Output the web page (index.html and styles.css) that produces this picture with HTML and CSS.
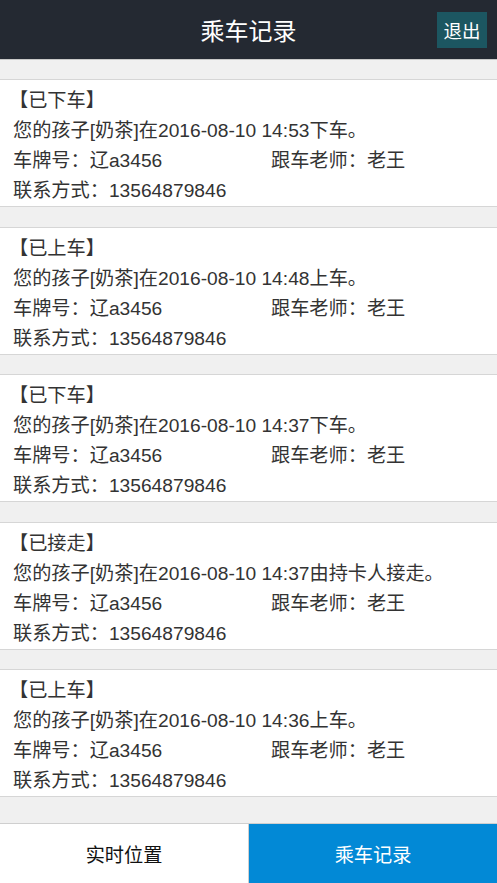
FILE: index.html
```html
<!DOCTYPE html>
<html lang="zh-CN">
<head>
<meta charset="UTF-8">
<meta name="viewport" content="width=device-width, initial-scale=1.0">
<title>乘车记录</title>
<link rel="stylesheet" href="styles.css">
</head>
<body>
  <header class="top-bar">
    <h1 class="top-title">乘车记录</h1>
    <button class="logout-btn" type="button">退出</button>
  </header>

  <main class="record-list">
    <div class="record">
      <p class="status">【已下车】</p>
      <p>您的孩子[奶茶]在2016-08-10 14:53下车。</p>
      <div class="record-row">
        <span>车牌号：辽a3456</span>
        <span>跟车老师：老王</span>
      </div>
      <p>联系方式：13564879846</p>
    </div>
    <div class="record">
      <p class="status">【已上车】</p>
      <p>您的孩子[奶茶]在2016-08-10 14:48上车。</p>
      <div class="record-row">
        <span>车牌号：辽a3456</span>
        <span>跟车老师：老王</span>
      </div>
      <p>联系方式：13564879846</p>
    </div>
    <div class="record">
      <p class="status">【已下车】</p>
      <p>您的孩子[奶茶]在2016-08-10 14:37下车。</p>
      <div class="record-row">
        <span>车牌号：辽a3456</span>
        <span>跟车老师：老王</span>
      </div>
      <p>联系方式：13564879846</p>
    </div>
    <div class="record">
      <p class="status">【已接走】</p>
      <p>您的孩子[奶茶]在2016-08-10 14:37由持卡人接走。</p>
      <div class="record-row">
        <span>车牌号：辽a3456</span>
        <span>跟车老师：老王</span>
      </div>
      <p>联系方式：13564879846</p>
    </div>
    <div class="record">
      <p class="status">【已上车】</p>
      <p>您的孩子[奶茶]在2016-08-10 14:36上车。</p>
      <div class="record-row">
        <span>车牌号：辽a3456</span>
        <span>跟车老师：老王</span>
      </div>
      <p>联系方式：13564879846</p>
    </div>
  </main>

  <nav class="tab-bar">
    <a class="tab" href="#">实时位置</a>
    <a class="tab active" href="#">乘车记录</a>
  </nav>
</body>
</html>
```

FILE: styles.css
```css
html, body {
  height: 100%;
}

body {
  margin: 0;
  font-family: "Liberation Sans", "Noto Sans CJK SC", sans-serif;
  background-color: #f0f0f0;
  color: #333;
  display: flex;
  flex-direction: column;
}

.top-bar {
  height: 59px;
  flex-shrink: 0;
  background-color: #242932;
  border-bottom: 1px solid #c8c8c8;
  display: flex;
  align-items: center;
  justify-content: center;
  position: relative;
}

.top-title {
  margin: 0;
  color: #fff;
  font-size: 24px;
  font-weight: normal;
}

.logout-btn {
  position: absolute;
  right: 10px;
  top: 12px;
  width: 50px;
  height: 36px;
  padding: 0;
  border: none;
  background-color: #1c5661;
  color: #fff;
  font-family: inherit;
  font-size: 18.5px;
}

.record-list {
  flex: 1;
  overflow: hidden;
  padding-top: 19px;
  display: flex;
  flex-direction: column;
  gap: 19.5px;
}

.record {
  background-color: #fff;
  border-top: 1px solid #d6d6d6;
  border-bottom: 1px solid #d6d6d6;
  padding: 6px 13px 0;
  font-size: 19.2px;
  line-height: 30px;
}

.record p {
  margin: 0;
  white-space: nowrap;
}

.record .status {
  margin-left: -4px;
}

.record-row {
  display: grid;
  grid-template-columns: 258px 1fr;
}

.tab-bar {
  height: 59px;
  flex-shrink: 0;
  border-top: 1px solid #cfcfcf;
  display: flex;
}

.tab {
  flex: 1;
  display: flex;
  align-items: center;
  justify-content: center;
  background-color: #fff;
  color: #111;
  font-size: 19.2px;
  text-decoration: none;
}

.tab:first-child {
  border-right: 1px solid #cfcfcf;
}

.tab.active {
  background-color: #0289d6;
  color: #fff;
}
```
